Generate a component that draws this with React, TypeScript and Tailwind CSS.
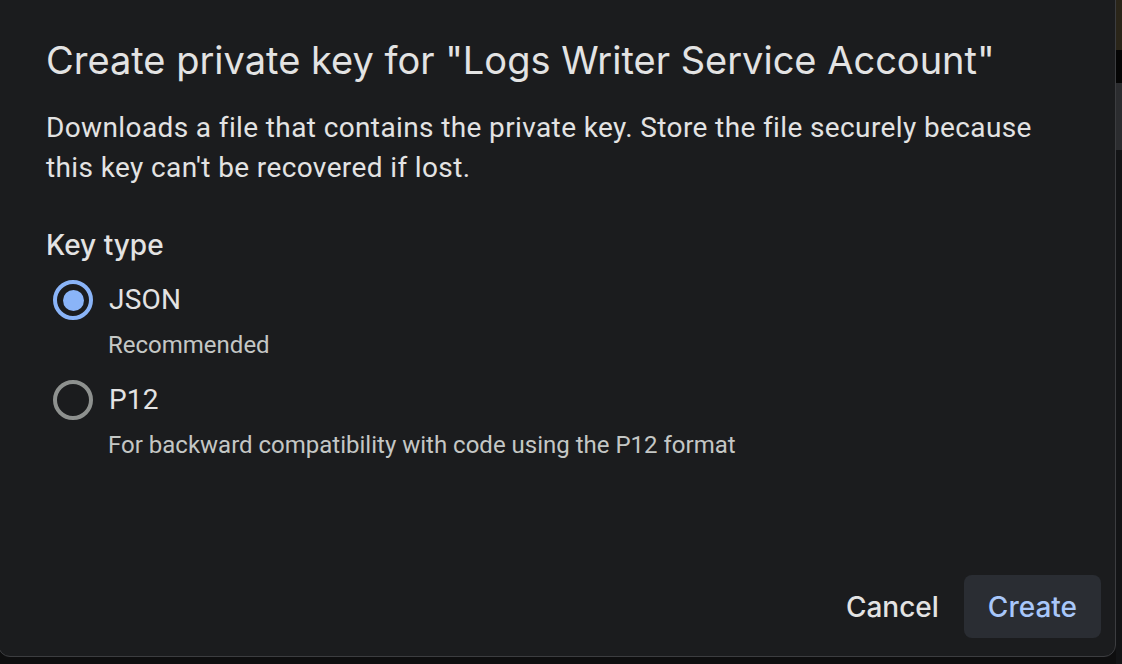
import { useState } from "react";

const KEY_TYPES = [
  { id: "json", label: "JSON", hint: "Recommended" },
  { id: "p12", label: "P12", hint: "For backward compatibility with code using the P12 format" },
];

export default function App() {
  const [keyType, setKeyType] = useState("json");

  return (
    <div className="h-[664px] w-[1122px] overflow-hidden bg-[#0e0e0f] flex">
      {/* Scrollbar hint behind the dialog */}
      <div className="order-2 flex-1 flex flex-col">
        <div className="h-[50px] bg-[#2a2519]" />
        <div className="h-[33px] bg-[#050505]" />
        <div className="h-[67px] bg-[#2b2c2f]" />
        <div className="flex-1 bg-[#131416]" />
      </div>

      <div className="order-1 -ml-[2px] -mt-[20px] h-[677px] w-[1118px] shrink-0 rounded-[12px] border border-[#3c3d40] bg-[#1b1c1e] flex flex-col pl-[47px] pr-[14px] pt-[55px] pb-[18px]">
        <h1
          className="text-[38px] leading-[48px] text-[#e3e3e3] font-normal whitespace-nowrap"
          style={{ fontFamily: "Inter, 'Open Sans', sans-serif" }}
        >
          Create private key for "Logs Writer Service Account"
        </h1>

        <p
          className="mt-[24px] text-[28px] leading-[40px] tracking-[0.38px] text-[#e3e3e3] w-[1015px]"
          style={{ fontFamily: "Roboto, 'Noto Sans', sans-serif" }}
        >
          Downloads a file that contains the private key. Store the file securely because this key can't be
          recovered if lost.
        </p>

        <div
          className="mt-[39px] text-[28px] leading-[36px] font-medium text-[#e3e3e3]"
          style={{ fontFamily: "Inter, 'Open Sans', sans-serif" }}
        >
          Key type
        </div>

        <div className="mt-[13px] flex flex-col" style={{ fontFamily: "Roboto, 'Noto Sans', sans-serif" }}>
          {KEY_TYPES.map((t, i) => {
            const checked = keyType === t.id;
            return (
              <div key={t.id} className={i > 0 ? "mt-[16px]" : ""}>
                <button
                  onClick={() => setKeyType(t.id)}
                  className="flex h-[48px] items-center gap-[16px] pl-[7px]"
                >
                  <span
                    className={`flex h-[40px] w-[40px] items-center justify-center rounded-full border-[4px] ${
                      checked ? "border-[#8ab4f8]" : "border-[#8e918f]"
                    }`}
                  >
                    {checked && <span className="h-[21px] w-[21px] rounded-full bg-[#8ab4f8]" />}
                  </span>
                  <span className="text-[28px] leading-[36px] tracking-[0.2px] text-[#e3e3e3]">{t.label}</span>
                </button>
                <div className="mt-[6px] pl-[62px] text-[24px] leading-[30px] text-[#c4c7c5]">{t.hint}</div>
              </div>
            );
          })}
        </div>

        <div
          className="mt-auto flex items-center justify-end gap-[25px]"
          style={{ fontFamily: "Inter, 'Open Sans', sans-serif" }}
        >
          <button className="h-[63px] text-[28px] font-medium text-[#e3e3e3]">Cancel</button>
          <button className="h-[63px] rounded-[8px] bg-[#2a2d33] px-[24px] text-[28px] font-medium text-[#a8c7fa]">
            Create
          </button>
        </div>
      </div>
    </div>
  );
}
